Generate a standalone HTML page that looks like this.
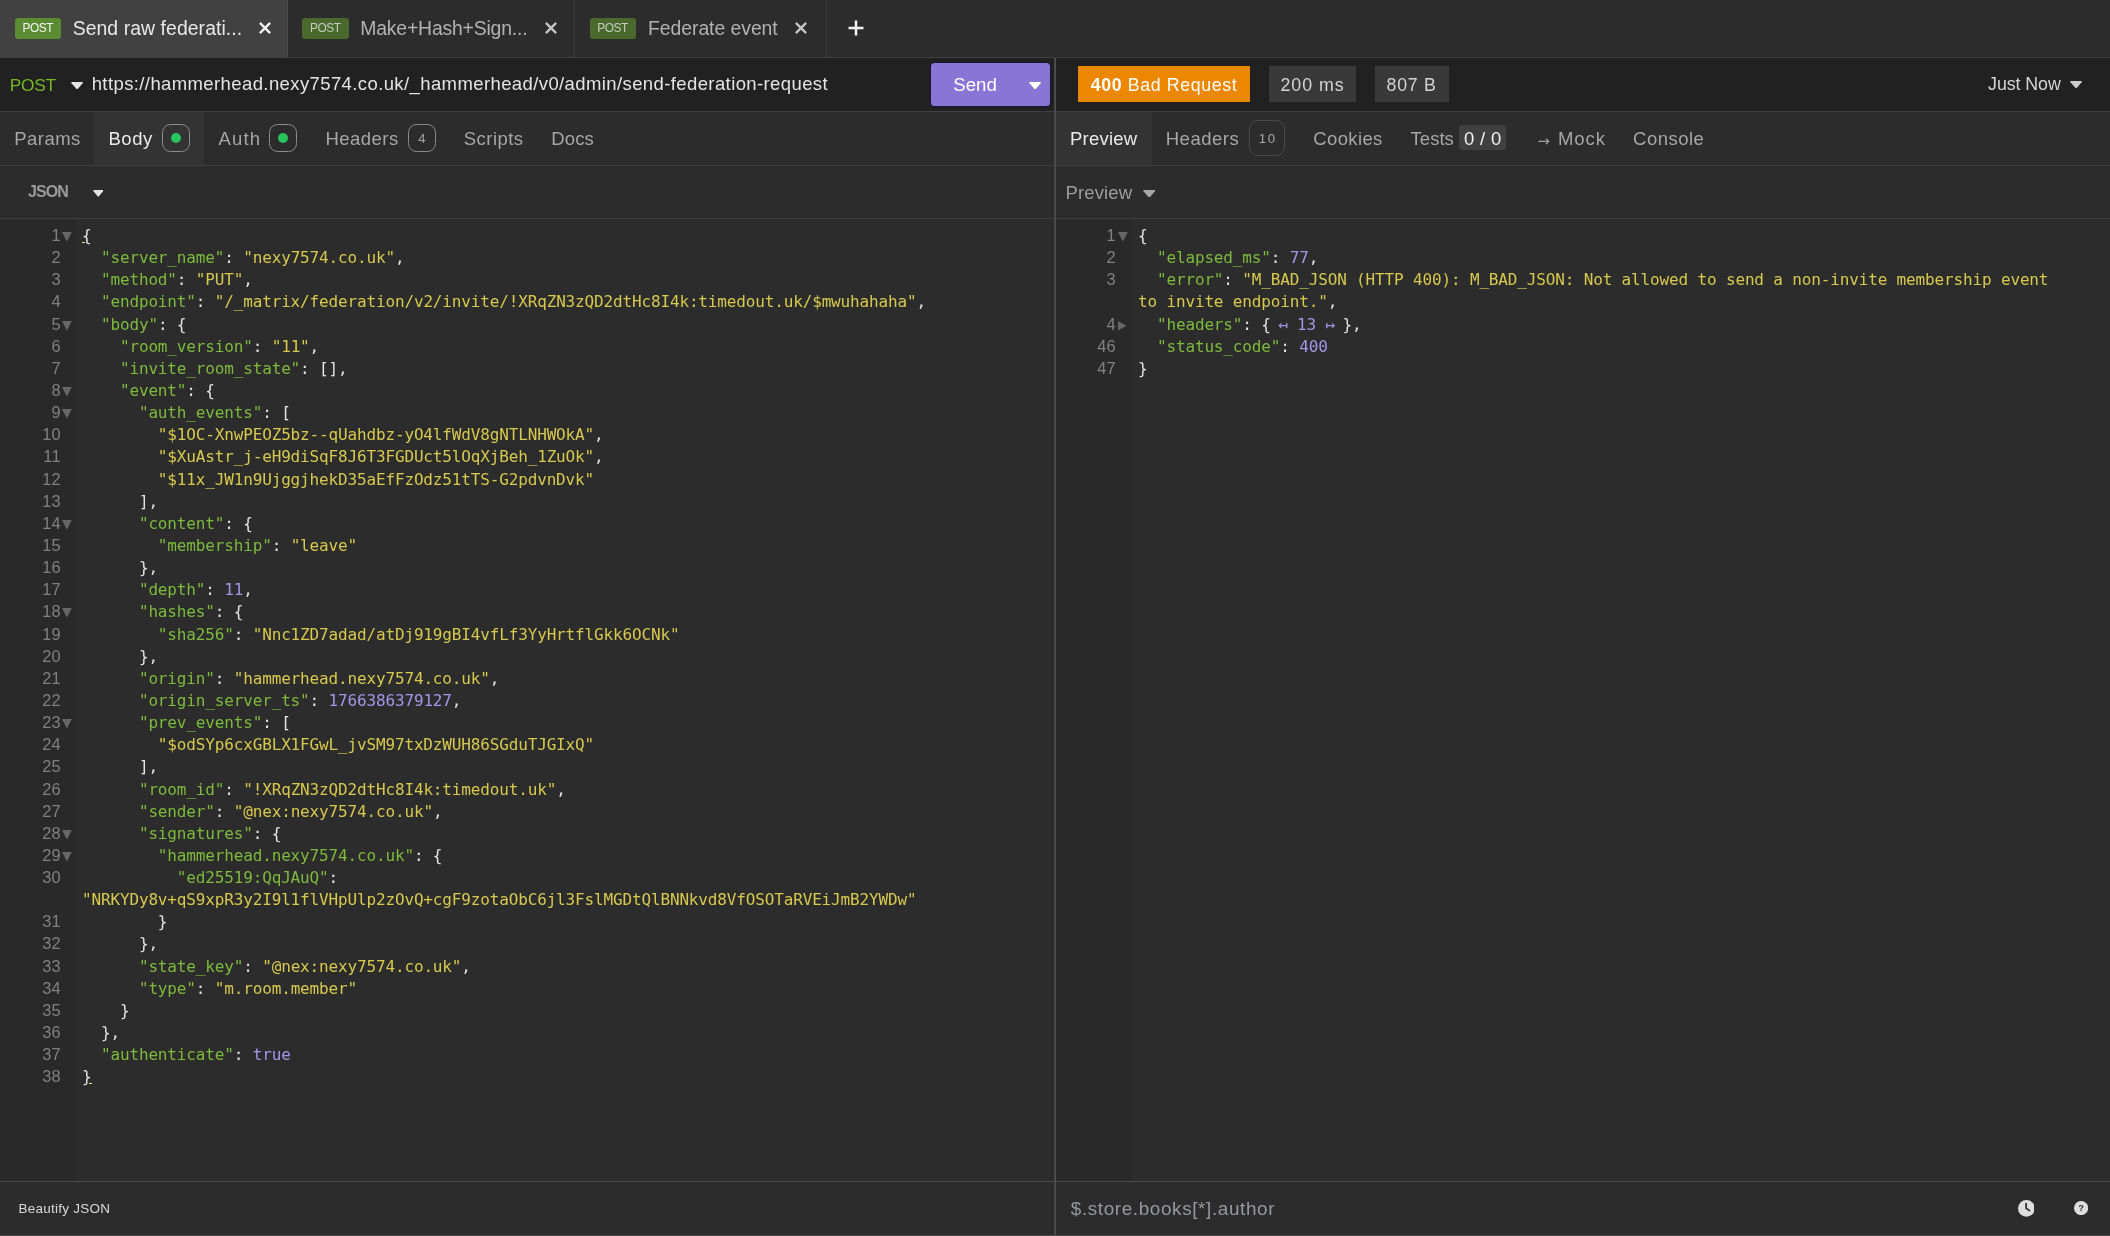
<!DOCTYPE html>
<html lang="en">
<head>
<meta charset="utf-8">
<title>Insomnia</title>
<style>
*{box-sizing:border-box;margin:0;padding:0}
html,body{width:2110px;height:1236px;overflow:hidden;background:#2c2c2c}
body{font-family:"Liberation Sans",sans-serif;color:#dcdcdc;position:relative}
#app{position:absolute;left:0;top:0;width:2110px;height:1236px;will-change:transform}
.abs{position:absolute}
.t{position:absolute;white-space:pre;line-height:24px;font-family:"Liberation Sans",sans-serif}
.hl{position:absolute;left:0;width:2110px;height:1px;background:#404040}
/* tab bar */
.tab{position:absolute;top:0;height:57px}
.tab.act{background:#414141}
.vsep{position:absolute;top:0;width:1px;height:57px;background:#3b3b3b}
.badge{position:absolute;top:18px;height:21px;width:46.5px;border-radius:3px;background:#5b8c31}
.badge.dim{background:#496a2c}
/* rows */
#urlrow{position:absolute;left:0;top:58px;width:2110px;height:53px;background:#212121}
#divider{position:absolute;left:1054px;top:58px;width:2px;height:1178px;background:#4e4e4e;border-left:1px solid #464646}
.actbg{position:absolute;top:112px;height:53px;background:#333333}
.box{position:absolute;top:124px;width:28px;height:28px;border:1px solid #8c8c8c;border-radius:8.5px}
.dot{position:absolute;left:7.5px;top:7.6px;width:10.6px;height:10.6px;border-radius:50%;background:#27c45c}
/* editor */
.gutter{position:absolute;top:219px;height:962px;background:#292929}
.ln{position:absolute;left:0;text-align:right;font-family:"Liberation Sans",sans-serif;font-size:16.4px;letter-spacing:0.15px;line-height:22.14px;color:#808080;height:22.14px}
.cl{position:absolute;font-family:"DejaVu Sans Mono","Liberation Mono",monospace;font-size:16px;letter-spacing:-0.1505px;line-height:22.14px;height:22.14px;white-space:pre;color:#e2e2e2}
.k{color:#7cbb3b}.s{color:#d8c84d}.n{color:#a195e6}.p{color:#e2e2e2}.f{color:#a195e6;padding:0 7.4px}
.fo{position:absolute;width:9.8px;height:9.6px;fill:#666666}
.fc{position:absolute;width:8.5px;height:9.4px;fill:#666666}
.lint{position:absolute;width:3.6px;height:1.6px;background:#e6e682}
.pane{position:absolute;top:0;height:1236px}
</style>
</head>
<body>
<div id="app">
<!-- request tab bar -->
<div class="tab act" style="left:0;width:287px"></div>
<div class="vsep" style="left:287px;background:#4b4b4b"></div>
<div class="vsep" style="left:574px"></div>
<div class="vsep" style="left:826px"></div>
<div class="badge" style="left:14.8px"></div><div class="t" style="left:22.5px;top:15.9px;font-size:11.9px;letter-spacing:-0.433px;color:#f4f4f4">POST</div><div class="t" style="left:72.65px;top:16.1px;font-size:19.4px;letter-spacing:0.071px;color:#e8e8e8">Send raw federati...</div>
<svg class="abs" style="left:258px;top:21px;width:14px;height:14px" viewBox="0 0 14 14"><path d="M1.9 1.9L12.1 12.1M12.1 1.9L1.9 12.1" stroke="#f2f2f2" stroke-width="2.3" fill="none"/></svg>
<div class="badge dim" style="left:302.2px"></div><div class="t" style="left:310.0px;top:15.9px;font-size:11.9px;letter-spacing:-0.467px;color:#c4ccbc">POST</div><div class="t" style="left:360.3px;top:16.1px;font-size:19.4px;letter-spacing:-0.188px;color:#b2b2b2">Make+Hash+Sign...</div>
<svg class="abs" style="left:544px;top:21px;width:14px;height:14px" viewBox="0 0 14 14"><path d="M1.9 1.9L12.1 12.1M12.1 1.9L1.9 12.1" stroke="#c6c6c6" stroke-width="2.3" fill="none"/></svg>
<div class="badge dim" style="left:589.8px"></div><div class="t" style="left:597.2px;top:15.9px;font-size:11.9px;letter-spacing:-0.467px;color:#c4ccbc">POST</div><div class="t" style="left:648.0px;top:16.1px;font-size:19.4px;letter-spacing:-0.054px;color:#b2b2b2">Federate event</div>
<svg class="abs" style="left:794.2px;top:21px;width:14px;height:14px" viewBox="0 0 14 14"><path d="M1.9 1.9L12.1 12.1M12.1 1.9L1.9 12.1" stroke="#c6c6c6" stroke-width="2.3" fill="none"/></svg>
<svg class="abs" style="left:848px;top:19.8px;width:16px;height:16px" viewBox="0 0 16 16"><path d="M8 0.5V15.5M0.5 8H15.5" stroke="#f2f2f2" stroke-width="2.5" fill="none"/></svg>
<div class="hl" style="top:57px"></div>
<!-- url / status row -->
<div id="urlrow"></div>
<div class="t" style="left:9.8px;top:72.8px;font-size:17.3px;letter-spacing:-0.267px;color:#75ba24">POST</div>
<svg class="abs" style="left:70.8px;top:81.9px;width:12.2px;height:7.2px" viewBox="0 0 12.2 7.2"><path d="M1 0H11.2Q12.6 0.2 11.7 1.3L6.9 6.7Q6.1 7.4 5.3 6.7L0.5 1.3Q-0.4 0.2 1 0Z" fill="#e4e4e4"/></svg>
<div class="t" style="left:91.7px;top:71.8px;font-size:18.5px;letter-spacing:0.396px;color:#e4e4e4">https://hammerhead.nexy7574.co.uk/_hammerhead/v0/admin/send-federation-request</div>
<div class="abs" style="left:931px;top:63px;width:119px;height:43px;background:#8776d5;border-radius:3.5px;box-shadow:0 0 0 1.2px #1b1632"></div>
<div class="t" style="left:953.2px;top:72.7px;font-size:18.7px;letter-spacing:0.033px;color:#ffffff">Send</div>
<svg class="abs" style="left:1028.8px;top:82.1px;width:12.2px;height:7.2px" viewBox="0 0 12.2 7.2"><path d="M1 0H11.2Q12.6 0.2 11.7 1.3L6.9 6.7Q6.1 7.4 5.3 6.7L0.5 1.3Q-0.4 0.2 1 0Z" fill="#ffffff"/></svg>
<div class="abs" style="left:1078px;top:66px;width:172px;height:36px;background:#ec8702"></div>
<div class="t" style="left:1090.7px;top:72.7px;font-size:17.8px;letter-spacing:0.621px;color:#ffffff"><b>400</b> Bad Request</div>
<div class="abs" style="left:1269px;top:66px;width:87px;height:36px;background:#393939"></div>
<div class="t" style="left:1280.4px;top:72.6px;font-size:17.8px;letter-spacing:0.98px;color:#d4d4d4">200 ms</div>
<div class="abs" style="left:1375px;top:66px;width:74px;height:36px;background:#393939"></div>
<div class="t" style="left:1386.6px;top:72.6px;font-size:17.8px;letter-spacing:0.725px;color:#d4d4d4">807 B</div>
<div class="t" style="left:1988.1px;top:71.9px;font-size:17.8px;letter-spacing:-0.071px;color:#d4d4d4">Just Now</div>
<svg class="abs" style="left:2070.4px;top:81.2px;width:12.2px;height:7.2px" viewBox="0 0 12.2 7.2"><path d="M1 0H11.2Q12.6 0.2 11.7 1.3L6.9 6.7Q6.1 7.4 5.3 6.7L0.5 1.3Q-0.4 0.2 1 0Z" fill="#cccccc"/></svg>
<div class="hl" style="top:111px"></div>
<!-- left request tabs -->
<div class="actbg" style="left:94px;width:110px"></div>
<div class="t" style="left:14.2px;top:126.7px;font-size:18.5px;letter-spacing:0.48px;color:#a6a6a6">Params</div><div class="t" style="left:108.5px;top:126.7px;font-size:18.5px;letter-spacing:0.533px;color:#eaeaea">Body</div>
<div class="box" style="left:162px"><div class="dot"></div></div>
<div class="t" style="left:218.4px;top:126.7px;font-size:18.5px;letter-spacing:1.2px;color:#a6a6a6">Auth</div>
<div class="box" style="left:269px"><div class="dot"></div></div>
<div class="t" style="left:325.5px;top:126.7px;font-size:18.5px;letter-spacing:0.467px;color:#a6a6a6">Headers</div>
<div class="box" style="left:408px"></div><div class="t" style="left:418.3px;top:126.7px;font-size:13.0px;letter-spacing:0.9px;color:#a6a6a6">4</div>
<div class="t" style="left:463.8px;top:126.7px;font-size:18.5px;letter-spacing:0.45px;color:#a6a6a6">Scripts</div><div class="t" style="left:551.2px;top:126.7px;font-size:18.5px;letter-spacing:0.167px;color:#a6a6a6">Docs</div>
<!-- right response tabs -->
<div class="actbg" style="left:1056px;width:96px"></div>
<div class="t" style="left:1070.0px;top:126.7px;font-size:18.5px;letter-spacing:0.233px;color:#eaeaea">Preview</div><div class="t" style="left:1165.7px;top:126.7px;font-size:18.5px;letter-spacing:0.533px;color:#a6a6a6">Headers</div>
<div class="abs" style="left:1249px;top:120px;width:36px;height:35.5px;border:1px solid #484848;border-radius:9px"></div><div class="t" style="left:1258.8px;top:126.6px;font-size:13.2px;letter-spacing:1.5px;color:#a6a6a6">10</div>
<div class="t" style="left:1313.3px;top:126.7px;font-size:18.5px;letter-spacing:0.367px;color:#a6a6a6">Cookies</div><div class="t" style="left:1410.6px;top:126.7px;font-size:18.5px;letter-spacing:0.0px;color:#a6a6a6">Tests</div>
<div class="abs" style="left:1459.3px;top:125px;width:46.4px;height:24.6px;background:#404040;border-radius:3px"></div>
<div class="t" style="left:1464.1px;top:126.7px;font-size:18.5px;letter-spacing:0.275px;color:#f0f0f0">0 / 0</div>
<div class="t" style="left:1537.6px;top:128.6px;font-family:'DejaVu Sans',sans-serif;font-size:14.8px;color:#a2a2a2">→</div>
<div class="t" style="left:1557.9px;top:126.7px;font-size:18.5px;letter-spacing:0.967px;color:#a6a6a6">Mock</div><div class="t" style="left:1633.1px;top:126.7px;font-size:18.5px;letter-spacing:0.467px;color:#a6a6a6">Console</div>
<div class="hl" style="top:165px"></div>
<!-- row 4 -->
<div class="t" style="left:28.0px;top:179.8px;font-size:16.0px;letter-spacing:-0.933px;color:#9a9a9a;font-weight:bold">JSON</div>
<svg class="abs" style="left:92.9px;top:189.8px;width:10.6px;height:6.8px" viewBox="0 0 10.6 6.8"><path d="M0.9 0H9.7Q10.9 0.2 10.1 1.2L6 6.3Q5.3 7 4.6 6.3L0.5 1.2Q-0.3 0.2 0.9 0Z" fill="#e2e2e2"/></svg>
<div class="t" style="left:1065.4px;top:180.7px;font-size:18.5px;letter-spacing:0.15px;color:#9c9c9c">Preview</div>
<svg class="abs" style="left:1142.8px;top:190px;width:12.4px;height:7.4px" viewBox="0 0 12.4 7.4"><path d="M1 0H11.4Q12.8 0.2 11.9 1.3L7 6.9Q6.2 7.6 5.4 6.9L0.5 1.3Q-0.4 0.2 1 0Z" fill="#a6a6a6"/></svg>
<div class="hl" style="top:218px"></div>
<!-- editors -->
<div class="gutter" style="left:0;width:76px"></div>
<div class="gutter" style="left:1056px;width:76.5px"></div>
<div class="pane" style="left:0;width:1054px">
<div class="ln" style="top:224.00px;width:60.7px">1</div><svg class="fo" style="top:232.05px;left:62px" viewBox="0 0 9.8 9.6"><path d="M0 0H9.8L4.9 9.6Z"/></svg><div class="cl" style="top:225.00px;left:82px"><span class="p">{</span></div><div class="ln" style="top:246.14px;width:60.7px">2</div><div class="cl" style="top:247.14px;left:82px">  <span class="k">&quot;server_name&quot;</span><span class="p">:</span> <span class="s">&quot;nexy7574.co.uk&quot;</span><span class="p">,</span></div><div class="ln" style="top:268.28px;width:60.7px">3</div><div class="cl" style="top:269.28px;left:82px">  <span class="k">&quot;method&quot;</span><span class="p">:</span> <span class="s">&quot;PUT&quot;</span><span class="p">,</span></div><div class="ln" style="top:290.42px;width:60.7px">4</div><div class="cl" style="top:291.42px;left:82px">  <span class="k">&quot;endpoint&quot;</span><span class="p">:</span> <span class="s">&quot;/_matrix/federation/v2/invite/!XRqZN3zQD2dtHc8I4k:timedout.uk/$mwuhahaha&quot;</span><span class="p">,</span></div><div class="ln" style="top:312.56px;width:60.7px">5</div><svg class="fo" style="top:320.61px;left:62px" viewBox="0 0 9.8 9.6"><path d="M0 0H9.8L4.9 9.6Z"/></svg><div class="cl" style="top:313.56px;left:82px">  <span class="k">&quot;body&quot;</span><span class="p">:</span> <span class="p">{</span></div><div class="ln" style="top:334.70px;width:60.7px">6</div><div class="cl" style="top:335.70px;left:82px">    <span class="k">&quot;room_version&quot;</span><span class="p">:</span> <span class="s">&quot;11&quot;</span><span class="p">,</span></div><div class="ln" style="top:356.84px;width:60.7px">7</div><div class="cl" style="top:357.84px;left:82px">    <span class="k">&quot;invite_room_state&quot;</span><span class="p">:</span> <span class="p">[</span><span class="p">]</span><span class="p">,</span></div><div class="ln" style="top:378.98px;width:60.7px">8</div><svg class="fo" style="top:387.03px;left:62px" viewBox="0 0 9.8 9.6"><path d="M0 0H9.8L4.9 9.6Z"/></svg><div class="cl" style="top:379.98px;left:82px">    <span class="k">&quot;event&quot;</span><span class="p">:</span> <span class="p">{</span></div><div class="ln" style="top:401.12px;width:60.7px">9</div><svg class="fo" style="top:409.17px;left:62px" viewBox="0 0 9.8 9.6"><path d="M0 0H9.8L4.9 9.6Z"/></svg><div class="cl" style="top:402.12px;left:82px">      <span class="k">&quot;auth_events&quot;</span><span class="p">:</span> <span class="p">[</span></div><div class="ln" style="top:423.26px;width:60.7px">10</div><div class="cl" style="top:424.26px;left:82px">        <span class="s">&quot;$1OC-XnwPEOZ5bz--qUahdbz-yO4lfWdV8gNTLNHWOkA&quot;</span><span class="p">,</span></div><div class="ln" style="top:445.40px;width:60.7px">11</div><div class="cl" style="top:446.40px;left:82px">        <span class="s">&quot;$XuAstr_j-eH9diSqF8J6T3FGDUct5lOqXjBeh_1ZuOk&quot;</span><span class="p">,</span></div><div class="ln" style="top:467.54px;width:60.7px">12</div><div class="cl" style="top:468.54px;left:82px">        <span class="s">&quot;$11x_JW1n9UjggjhekD35aEfFzOdz51tTS-G2pdvnDvk&quot;</span></div><div class="ln" style="top:489.68px;width:60.7px">13</div><div class="cl" style="top:490.68px;left:82px">      <span class="p">]</span><span class="p">,</span></div><div class="ln" style="top:511.82px;width:60.7px">14</div><svg class="fo" style="top:519.87px;left:62px" viewBox="0 0 9.8 9.6"><path d="M0 0H9.8L4.9 9.6Z"/></svg><div class="cl" style="top:512.82px;left:82px">      <span class="k">&quot;content&quot;</span><span class="p">:</span> <span class="p">{</span></div><div class="ln" style="top:533.96px;width:60.7px">15</div><div class="cl" style="top:534.96px;left:82px">        <span class="k">&quot;membership&quot;</span><span class="p">:</span> <span class="s">&quot;leave&quot;</span></div><div class="ln" style="top:556.10px;width:60.7px">16</div><div class="cl" style="top:557.10px;left:82px">      <span class="p">}</span><span class="p">,</span></div><div class="ln" style="top:578.24px;width:60.7px">17</div><div class="cl" style="top:579.24px;left:82px">      <span class="k">&quot;depth&quot;</span><span class="p">:</span> <span class="n">11</span><span class="p">,</span></div><div class="ln" style="top:600.38px;width:60.7px">18</div><svg class="fo" style="top:608.43px;left:62px" viewBox="0 0 9.8 9.6"><path d="M0 0H9.8L4.9 9.6Z"/></svg><div class="cl" style="top:601.38px;left:82px">      <span class="k">&quot;hashes&quot;</span><span class="p">:</span> <span class="p">{</span></div><div class="ln" style="top:622.52px;width:60.7px">19</div><div class="cl" style="top:623.52px;left:82px">        <span class="k">&quot;sha256&quot;</span><span class="p">:</span> <span class="s">&quot;Nnc1ZD7adad/atDj919gBI4vfLf3YyHrtflGkk6OCNk&quot;</span></div><div class="ln" style="top:644.66px;width:60.7px">20</div><div class="cl" style="top:645.66px;left:82px">      <span class="p">}</span><span class="p">,</span></div><div class="ln" style="top:666.80px;width:60.7px">21</div><div class="cl" style="top:667.80px;left:82px">      <span class="k">&quot;origin&quot;</span><span class="p">:</span> <span class="s">&quot;hammerhead.nexy7574.co.uk&quot;</span><span class="p">,</span></div><div class="ln" style="top:688.94px;width:60.7px">22</div><div class="cl" style="top:689.94px;left:82px">      <span class="k">&quot;origin_server_ts&quot;</span><span class="p">:</span> <span class="n">1766386379127</span><span class="p">,</span></div><div class="ln" style="top:711.08px;width:60.7px">23</div><svg class="fo" style="top:719.13px;left:62px" viewBox="0 0 9.8 9.6"><path d="M0 0H9.8L4.9 9.6Z"/></svg><div class="cl" style="top:712.08px;left:82px">      <span class="k">&quot;prev_events&quot;</span><span class="p">:</span> <span class="p">[</span></div><div class="ln" style="top:733.22px;width:60.7px">24</div><div class="cl" style="top:734.22px;left:82px">        <span class="s">&quot;$odSYp6cxGBLX1FGwL_jvSM97txDzWUH86SGduTJGIxQ&quot;</span></div><div class="ln" style="top:755.36px;width:60.7px">25</div><div class="cl" style="top:756.36px;left:82px">      <span class="p">]</span><span class="p">,</span></div><div class="ln" style="top:777.50px;width:60.7px">26</div><div class="cl" style="top:778.50px;left:82px">      <span class="k">&quot;room_id&quot;</span><span class="p">:</span> <span class="s">&quot;!XRqZN3zQD2dtHc8I4k:timedout.uk&quot;</span><span class="p">,</span></div><div class="ln" style="top:799.64px;width:60.7px">27</div><div class="cl" style="top:800.64px;left:82px">      <span class="k">&quot;sender&quot;</span><span class="p">:</span> <span class="s">&quot;@nex:nexy7574.co.uk&quot;</span><span class="p">,</span></div><div class="ln" style="top:821.78px;width:60.7px">28</div><svg class="fo" style="top:829.83px;left:62px" viewBox="0 0 9.8 9.6"><path d="M0 0H9.8L4.9 9.6Z"/></svg><div class="cl" style="top:822.78px;left:82px">      <span class="k">&quot;signatures&quot;</span><span class="p">:</span> <span class="p">{</span></div><div class="ln" style="top:843.92px;width:60.7px">29</div><svg class="fo" style="top:851.97px;left:62px" viewBox="0 0 9.8 9.6"><path d="M0 0H9.8L4.9 9.6Z"/></svg><div class="cl" style="top:844.92px;left:82px">        <span class="k">&quot;hammerhead.nexy7574.co.uk&quot;</span><span class="p">:</span> <span class="p">{</span></div><div class="ln" style="top:866.06px;width:60.7px">30</div><div class="cl" style="top:867.06px;left:82px">          <span class="k">&quot;ed25519:QqJAuQ&quot;</span><span class="p">:</span></div><div class="cl" style="top:889.20px;left:82px"><span class="s">&quot;NRKYDy8v+qS9xpR3y2I9l1flVHpUlp2zOvQ+cgF9zotaObC6jl3FslMGDtQlBNNkvd8VfOSOTaRVEiJmB2YWDw&quot;</span></div><div class="ln" style="top:910.34px;width:60.7px">31</div><div class="cl" style="top:911.34px;left:82px">        <span class="p">}</span></div><div class="ln" style="top:932.48px;width:60.7px">32</div><div class="cl" style="top:933.48px;left:82px">      <span class="p">}</span><span class="p">,</span></div><div class="ln" style="top:954.62px;width:60.7px">33</div><div class="cl" style="top:955.62px;left:82px">      <span class="k">&quot;state_key&quot;</span><span class="p">:</span> <span class="s">&quot;@nex:nexy7574.co.uk&quot;</span><span class="p">,</span></div><div class="ln" style="top:976.76px;width:60.7px">34</div><div class="cl" style="top:977.76px;left:82px">      <span class="k">&quot;type&quot;</span><span class="p">:</span> <span class="s">&quot;m.room.member&quot;</span></div><div class="ln" style="top:998.90px;width:60.7px">35</div><div class="cl" style="top:999.90px;left:82px">    <span class="p">}</span></div><div class="ln" style="top:1021.04px;width:60.7px">36</div><div class="cl" style="top:1022.04px;left:82px">  <span class="p">}</span><span class="p">,</span></div><div class="ln" style="top:1043.18px;width:60.7px">37</div><div class="cl" style="top:1044.18px;left:82px">  <span class="k">&quot;authenticate&quot;</span><span class="p">:</span> <span class="n">true</span></div><div class="ln" style="top:1065.32px;width:60.7px">38</div><div class="cl" style="top:1066.32px;left:82px"><span class="p">}</span></div>
<div class="lint" style="left:81.7px;top:241.7px"></div>
<div class="lint" style="left:89.2px;top:1082.8px;width:2.7px;height:1.2px"></div>
</div>
<div class="pane" style="left:1056px;width:1054px">
<div class="ln" style="top:224.00px;width:59.7px">1</div><svg class="fo" style="top:232.05px;left:62px" viewBox="0 0 9.8 9.6"><path d="M0 0H9.8L4.9 9.6Z"/></svg><div class="cl" style="top:225.00px;left:82px"><span class="p">{</span></div><div class="ln" style="top:246.14px;width:59.7px">2</div><div class="cl" style="top:247.14px;left:82px">  <span class="k">&quot;elapsed_ms&quot;</span><span class="p">:</span> <span class="n">77</span><span class="p">,</span></div><div class="ln" style="top:268.28px;width:59.7px">3</div><div class="cl" style="top:269.28px;left:82px">  <span class="k">&quot;error&quot;</span><span class="p">:</span> <span class="s">&quot;M_BAD_JSON (HTTP 400): M_BAD_JSON: Not allowed to send a non-invite membership event</span></div><div class="cl" style="top:291.42px;left:82px"><span class="s">to invite endpoint.&quot;</span><span class="p">,</span></div><div class="ln" style="top:312.56px;width:59.7px">4</div><svg class="fc" style="top:321.26px;left:62.1px" viewBox="0 0 8.5 9.4"><path d="M0 0V9.4L8.5 4.7Z"/></svg><div class="cl" style="top:313.56px;left:82px">  <span class="k">&quot;headers&quot;</span><span class="p">:</span> <span class="p">{</span><span class="f">↤ 13 ↦</span><span class="p">}</span><span class="p">,</span></div><div class="ln" style="top:334.70px;width:59.7px">46</div><div class="cl" style="top:335.70px;left:82px">  <span class="k">&quot;status_code&quot;</span><span class="p">:</span> <span class="n">400</span></div><div class="ln" style="top:356.84px;width:59.7px">47</div><div class="cl" style="top:357.84px;left:82px"><span class="p">}</span></div>
</div>
<div class="hl" style="top:1181px;background:#4b4b4b"></div>
<div class="t" style="left:18.6px;top:1196.7px;font-size:13.5px;letter-spacing:0.233px;color:#d8d8d8">Beautify JSON</div>
<div class="t" style="left:1070.8px;top:1197.0px;font-size:18.9px;letter-spacing:0.618px;color:#96989e">$.store.books[*].author</div>
<svg class="abs" style="left:2017.6px;top:1199.8px;width:16.8px;height:16.8px" viewBox="0 0 16.8 16.8"><circle cx="8.4" cy="8.4" r="8.4" fill="#dedede"/><path d="M8.1 3.6V8.3L11.6 10.6" stroke="#2c2c2c" stroke-width="1.7" fill="none" stroke-linecap="round" stroke-linejoin="round"/></svg>
<svg class="abs" style="left:2074px;top:1201px;width:14.2px;height:14.2px" viewBox="0 0 14.2 14.2"><circle cx="7.1" cy="7.1" r="7.1" fill="#dedede"/><text x="7.1" y="10.3" font-family="Liberation Sans, sans-serif" font-weight="bold" font-size="8.8" text-anchor="middle" fill="#2c2c2c">?</text></svg>
<div class="abs" style="left:0;top:1235px;width:2110px;height:1px;background:#4e4e4e"></div>
<div id="divider"></div>
</div>
</body>
</html>
